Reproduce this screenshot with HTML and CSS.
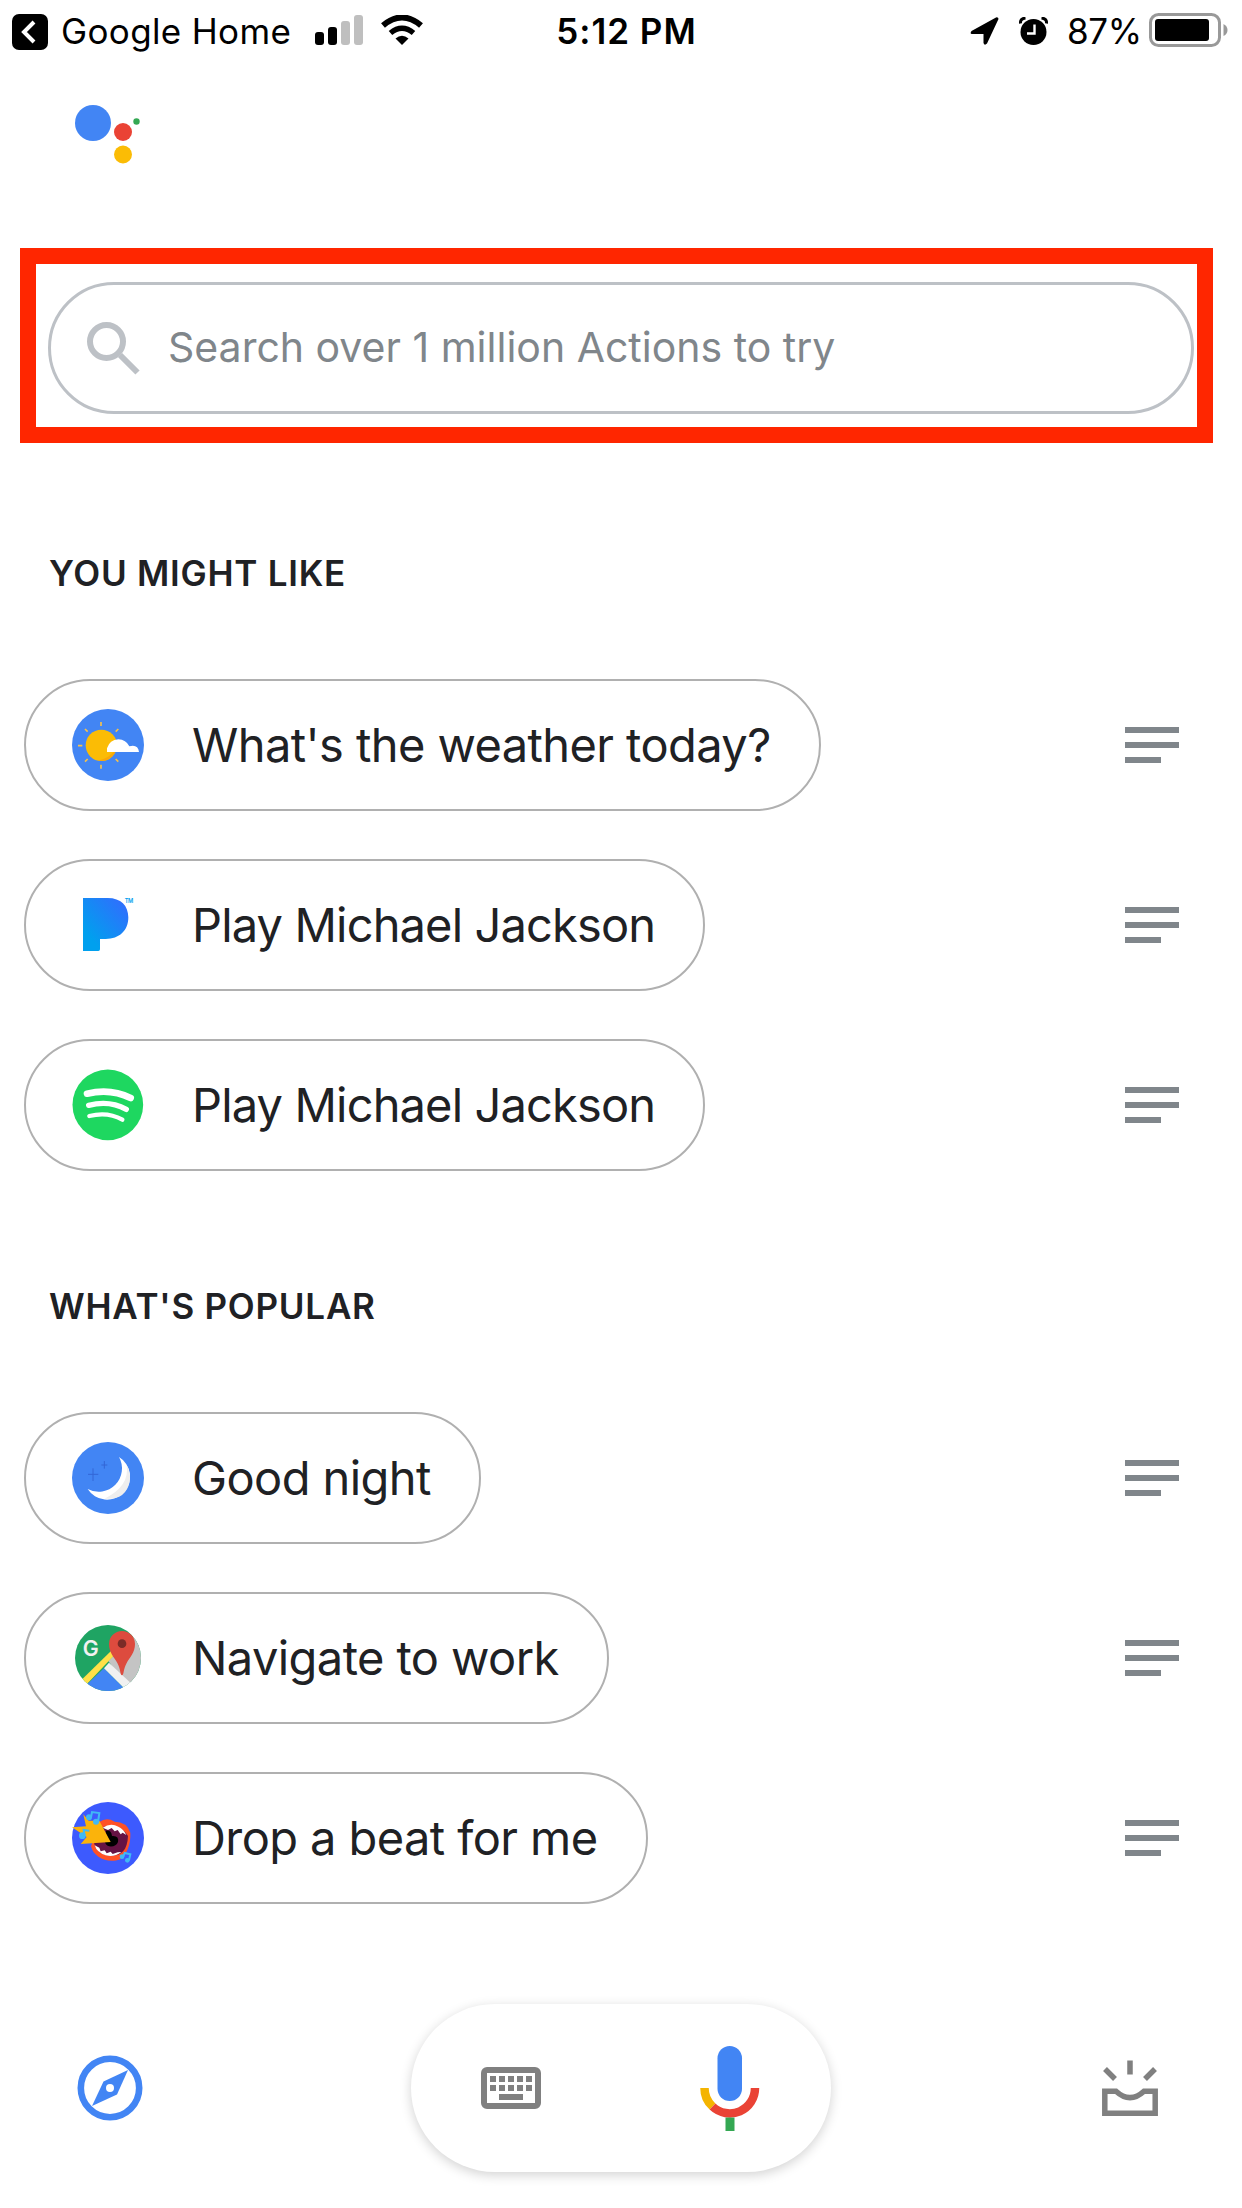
FILE: index.html
```html
<!DOCTYPE html>
<html lang="en">
<head>
    <meta charset="UTF-8">
    <meta name="viewport" content="width=device-width, initial-scale=1.0">
    <title>Google Assistant - Explore</title>
    <link rel="stylesheet" href="styles.css">
</head>
<body>
    <header class="status-bar">
        <div class="status-left">
            <svg class="back-icon" viewBox="0 0 36 36">
                <rect width="36" height="36" rx="7"/>
                <path d="M22 8 12 18 22 28" fill="none" stroke="#fff" stroke-width="4"/>
            </svg>
            <span class="back-label">Google Home</span>
            <svg class="signal-icon" viewBox="0 0 48 30">
                <rect x="0" y="17" width="9" height="13" rx="3"/>
                <rect x="13" y="12" width="9" height="18" rx="3"/>
                <rect x="26" y="6" width="9" height="24" rx="3" fill="#bfbfbf"/>
                <rect x="39" y="0" width="9" height="30" rx="3" fill="#bfbfbf"/>
            </svg>
            <svg class="wifi-icon" viewBox="0 0 42 30">
                <path d="M2 10.500Q21 -5.500 40 10.500" fill="none" stroke="#000" stroke-width="6"/>
                <path d="M9.500 18Q21 8.500 32.500 18" fill="none" stroke="#000" stroke-width="5.500"/>
                <path d="M14.500 23.500Q21 18 27.500 23.500L21 30z"/>
            </svg>
        </div>
        <span class="time">5:12 PM</span>
        <div class="status-right">
            <svg class="location-icon" viewBox="0 0 29 28">
                <path d="M26 .4 1.500 14Q-.5 17 2 17H13.500V26Q14.500 29 17 26.500L28.500 2Q28.500 0 26 .4z"/>
            </svg>
            <svg class="alarm-icon" viewBox="0 0 29 28">
                <circle cx="14.500" cy="15" r="13"/>
                <path d="M1.500 6.500Q1 1.500 6.500 1M22.500 1Q28 1.500 27.500 6.500" fill="none" stroke="#000" stroke-width="3"/>
                <path d="M15.500 7.500V16.500H8" fill="none" stroke="#fff" stroke-width="2.400"/>
            </svg>
            <span class="battery-label">87%</span>
            <svg class="battery-icon" viewBox="0 0 79 34">
                <rect x="1.500" y="1.500" width="69" height="31" rx="8" fill="none" stroke="#999" stroke-width="3"/>
                <rect x="6" y="6" width="54" height="22" rx="3"/>
                <path d="M74.500 11Q78.500 13 78.500 17T74.500 23z" fill="#999"/>
            </svg>
        </div>
    </header>

    <svg class="assistant-logo" viewBox="0 0 66 60">
        <circle cx="18" cy="18" r="18" fill="#4285f4"/>
        <circle cx="48" cy="27" r="9" fill="#ea4335"/>
        <circle cx="48" cy="49.500" r="9" fill="#fbbc05"/>
        <circle cx="61.500" cy="16.500" r="3.200" fill="#34a853"/>
    </svg>

    <div class="highlight">
        <div class="search">
            <svg class="search-icon" viewBox="0 0 54 54">
                <circle cx="20.500" cy="20.500" r="16.500"/>
                <path d="M34 34 51.500 51.500"/>
            </svg>
            <span class="search-text">Search over 1 million Actions to try</span>
        </div>
    </div>

    <main>
        <section class="group">
            <h2>YOU MIGHT LIKE</h2>
            <div class="row">
                <div class="chip">
                    <svg class="chip-icon" viewBox="0 0 216 216">
                        <circle cx="108" cy="108" r="108" fill="#4285f4"/>
                        <g stroke="#f6c14a" stroke-width="5">
                            <path d="M87 39v12M87 167v12M18 110h13M39 60l8 8M139 60l-8 8M39 158l8-8M139 158l-8-8"/>
                        </g>
                        <circle cx="88" cy="109" r="47" fill="#fbbc05"/>
                        <path d="M78 155Q112 148 133 120L130 130A47 47 0 0 1 78 155z" fill="#f9a60a"/>
                        <path d="M105 129V118Q113 92 139 91 162 92 172 112 198 105 201 129z" fill="#fff"/>
                    </svg>
                    <span class="chip-text">What's the weather today?</span>
                </div>
                <svg class="menu-icon" viewBox="0 0 24 24"><path d="M3 18h12v-2H3zM3 6v2h18V6zM3 13h18v-2H3z"/></svg>
            </div>
            <div class="row">
                <div class="chip chip-music">
                    <svg class="chip-icon" viewBox="0 0 216 216">
                        <defs>
                            <linearGradient id="pandora" x1="0" y1="1" x2="1" y2="0">
                                <stop offset=".2" stop-color="#00a0ee"/>
                                <stop offset="1" stop-color="#3668ff"/>
                            </linearGradient>
                        </defs>
                        <path d="M33 27H107C147 27 169 50 169 85 169 125 142 150 101 150H84V181Q84 186 79 186H33z" fill="url(#pandora)"/>
                        <text x="158" y="41" class="trademark">TM</text>
                    </svg>
                    <span class="chip-text">Play Michael Jackson</span>
                </div>
                <svg class="menu-icon" viewBox="0 0 24 24"><path d="M3 18h12v-2H3zM3 6v2h18V6zM3 13h18v-2H3z"/></svg>
            </div>
            <div class="row">
                <div class="chip chip-music">
                    <svg class="chip-icon" viewBox="0 0 216 216">
                        <circle cx="107.500" cy="107.500" r="106" fill="#1ed760"/>
                        <g fill="none" stroke="#fff" stroke-linecap="round">
                            <path d="M45 74Q116 57 176 87" stroke-width="20"/>
                            <path d="M50 109Q112 93 163 121" stroke-width="16"/>
                            <path d="M52 141Q107 127 151 152" stroke-width="13"/>
                        </g>
                    </svg>
                    <span class="chip-text">Play Michael Jackson</span>
                </div>
                <svg class="menu-icon" viewBox="0 0 24 24"><path d="M3 18h12v-2H3zM3 6v2h18V6zM3 13h18v-2H3z"/></svg>
            </div>
        </section>

        <section class="group">
            <h2>WHAT'S POPULAR</h2>
            <div class="row">
                <div class="chip">
                    <svg class="chip-icon" viewBox="0 0 216 216">
                        <circle cx="108" cy="108" r="108" fill="#4285f4"/>
                        <path d="M141 45A70 70 0 0 1 47 141 69 69 0 1 0 141 45z" fill="#fff"/>
                        <path d="M164 70Q174 132 98 170 160 176 173 120 177 92 164 70z" fill="#eee"/>
                        <path d="M63 79v38M48 97h31M97 57v23M88 69h18" stroke="#3367d6" stroke-width="3"/>
                    </svg>
                    <span class="chip-text">Good night</span>
                </div>
                <svg class="menu-icon" viewBox="0 0 24 24"><path d="M3 18h12v-2H3zM3 6v2h18V6zM3 13h18v-2H3z"/></svg>
            </div>
            <div class="row">
                <div class="chip">
                    <svg class="chip-icon" viewBox="0 0 216 216">
                        <defs>
                            <clipPath id="map"><circle cx="108" cy="108" r="99"/></clipPath>
                        </defs>
                        <g clip-path="url(#map)">
                            <rect width="216" height="216" fill="#1fa463"/>
                            <path d="M109 117 190 38H216V216H180z" fill="#c4c4c4"/>
                            <path d="M22 180 130 74 138 88 37 194z" fill="#ffe047"/>
                            <path d="M96 139 30 201V216H174z" fill="#4285f4"/>
                            <path d="M96 139 111 122 185 191 165 207z" fill="#f1f1f1"/>
                        </g>
                        <path d="M150 160C144 160 147 143 136 123 126 105 111 92 111 66A39 39 0 0 1 189 66C189 92 174 105 164 123 153 143 156 160 150 160z" fill="#dd4b3e"/>
                        <circle cx="150" cy="65" r="13" fill="#7b2b27"/>
                        <text x="32" y="101" class="map-letter">G</text>
                    </svg>
                    <span class="chip-text">Navigate to work</span>
                </div>
                <svg class="menu-icon" viewBox="0 0 24 24"><path d="M3 18h12v-2H3zM3 6v2h18V6zM3 13h18v-2H3z"/></svg>
            </div>
            <div class="row">
                <div class="chip">
                    <svg class="chip-icon" viewBox="0 0 216 216">
                        <circle cx="108" cy="108" r="108" fill="#3d5afe"/>
                        <!-- mouth -->
                        <path d="M82 60Q104 44 128 59 164 59 175 92C177 130 162 160 144 172 108 186 64 166 57 133z" fill="#ff5126"/>
                        <path d="M90 76Q142 62 168 102C166 145 148 160 122 161 90 162 70 144 66 122z" fill="#661344"/>
                        <path d="M92 77Q116 61 139 74 156 82 163 99L152 92 146 97 137 84 128 88 119 78 108 84z" fill="#fff"/>
                        <path d="M68 130 82 137 86 148 98 145 104 154 116 149 122 156 137 151 148 150Q128 166 101 160 74 151 68 130z" fill="#fff"/>
                        <path d="M102 86Q118 84 120 102 142 100 138 120 132 135 112 133 101 130 99 119z" fill="#000"/>
                        <path d="M0 76 42 73 34 37 50 56 82 56 116 120 26 126 44 105z" fill="#fbb30b"/>
                        <!-- notes -->
                        <g fill="#40b9f5">
                            <circle cx="51" cy="46" r="9"/>
                            <circle cx="72" cy="59" r="9"/>
                            <circle cx="31" cy="101" r="10"/>
                            <circle cx="150" cy="164" r="7"/>
                            <circle cx="166" cy="175" r="7"/>
                        </g>
                        <path d="M57 46 60 30 82 33 78 60M38 100 35 84 52 86M154 164 158 153 175 157 171 175" fill="none" stroke="#40b9f5" stroke-width="6"/>
                    </svg>
                    <span class="chip-text">Drop a beat for me</span>
                </div>
                <svg class="menu-icon" viewBox="0 0 24 24"><path d="M3 18h12v-2H3zM3 6v2h18V6zM3 13h18v-2H3z"/></svg>
            </div>
        </section>
    </main>

    <footer class="bottom-bar">
        <svg class="compass-icon" viewBox="0 0 66 66">
            <circle cx="33" cy="33" r="29.200" fill="none" stroke="#4285f4" stroke-width="6.600"/>
            <path d="M51 15 26.500 26.500 15 51 40 39.500z" fill="#4285f4"/>
            <circle cx="33" cy="33" r="4" fill="#fff"/>
        </svg>
        <div class="input-pill">
            <svg class="keyboard-icon" viewBox="0 0 60 42">
                <rect x="3" y="3" width="54" height="36" rx="3" fill="none" stroke="#808080" stroke-width="6"/>
                <path d="M9 12H51M9 21H51" stroke="#808080" stroke-width="6" stroke-dasharray="6 3"/>
                <path d="M18 30H42" stroke="#808080" stroke-width="6"/>
            </svg>
            <svg class="mic-icon" viewBox="0 0 60 85">
                <rect x="17.500" y="0" width="24.500" height="55" rx="12.250" fill="#4285f4"/>
                <path d="M4.500 42A25 25 0 0 0 12.500 60.500" fill="none" stroke="#f4b400" stroke-width="8.500"/>
                <path d="M12.500 60.500A25.200 25.200 0 0 0 55 42" fill="none" stroke="#ea4335" stroke-width="8.500"/>
                <rect x="25.500" y="71.500" width="9" height="13.500" fill="#34a853"/>
            </svg>
        </div>
        <svg class="updates-icon" viewBox="0 0 56 57">
            <path d="M28 0.500V14.500M3 9 13 19M53 9 43 19" stroke-width="5.500"/>
            <path d="M2.800 31.200H14Q28 44 42 31.200H53.200V53.200H2.800z" stroke-width="5.500"/>
        </svg>
    </footer>
</body>
</html>
```

FILE: styles.css
```css
* {
    box-sizing: border-box;
}
body {
    margin: 0;
    height: 2208px;
    display: flex;
    flex-direction: column;
    background: #fff;
    font-family: Inter, "Liberation Sans", sans-serif;
    color: #202124;
    overflow: hidden;
    white-space: nowrap;
}
svg {
    display: block;
    flex: none;
}
.status-bar {
    height: 64px;
    padding: 0 14px 0 12px;
    display: grid;
    grid-template-columns: 1fr auto 1fr;
    align-items: center;
    font-size: 35px;
    line-height: 62px;
    color: #000;
}
.status-left, .status-right {
    display: flex;
    align-items: center;
    height: 64px;
}
.status-right {
    justify-content: flex-end;
}
.back-icon {
    width: 36px;
    height: 36px;
}
.back-label {
    width: 253px;
    padding: 0 0 2px 13px;
    letter-spacing: 0.35px;
}
.signal-icon {
    width: 48px;
    height: 30px;
    margin: -4px 18px 0 14px;
}
.wifi-icon {
    width: 42px;
    height: 30px;
    margin-top: -4px;
}
.time {
    padding: 0 0 2px 13px;
    font-weight: 600;
    letter-spacing: 1px;
}
.location-icon {
    width: 29px;
    height: 28px;
    margin-top: -2px;
}
.alarm-icon {
    width: 29px;
    height: 28px;
    margin: -3px 19px 0 20px;
}
.battery-label {
    width: 82px;
    padding-bottom: 2px;
    letter-spacing: -0.4px;
}
.battery-icon {
    width: 79px;
    height: 34px;
    margin-top: -4px;
}
.assistant-logo {
    width: 66px;
    height: 60px;
    margin: 41px 0 0 75px;
}
.highlight {
    width: 1193px;
    height: 195px;
    margin: 83px 0 0 20px;
    padding: 18px 3px 0 12px;
    border: 16px solid #ff2600;
}
.search {
    height: 132px;
    display: flex;
    align-items: center;
    padding-left: 35px;
    border: 3px solid #bdc1c6;
    border-radius: 66px;
}
.search-icon {
    width: 54px;
    height: 54px;
    fill: none;
    stroke: #bdc1c6;
    stroke-width: 6;
}
.search-text {
    margin-left: 28px;
    padding-bottom: 3px;
    font-size: 41px;
    color: #80868b;
}
.group {
    padding: 0 60px 0 24px;
}
.group h2 {
    height: 44px;
    margin: 108px 0 84px 25px;
    font-size: 35px;
    line-height: 44px;
    font-weight: 600;
    letter-spacing: 0.75px;
}
.group + .group h2 {
    margin-top: 113px;
}
.row {
    display: flex;
    justify-content: space-between;
    align-items: center;
    height: 132px;
    margin-bottom: 48px;
}
.chip {
    display: flex;
    align-items: center;
    height: 132px;
    padding: 0 48px 0 46px;
    border: 2px solid #b0b0b0;
    border-radius: 66px;
    font-size: 47px;
    letter-spacing: -0.58px;
}
.chip-music {
    letter-spacing: -0.85px;
}
.chip-icon {
    width: 72px;
    height: 72px;
    margin-right: 48px;
}
.chip-text {
    padding-bottom: 2px;
}
.trademark {
    font-size: 17px;
    font-weight: 600;
    fill: #00a0ee;
}
.map-letter {
    font-size: 64px;
    font-weight: 600;
    fill: #f1f1f1;
}
.menu-icon {
    width: 72px;
    height: 72px;
    margin-right: -6px;
    fill: #80868b;
}
.bottom-bar {
    display: flex;
    justify-content: space-between;
    align-items: center;
    height: 168px;
    margin-top: 52px;
    padding: 0 84px 0 77px;
}
.compass-icon {
    width: 66px;
    height: 66px;
}
.input-pill {
    width: 420px;
    height: 168px;
    display: flex;
    justify-content: space-between;
    align-items: center;
    margin-right: 4px;
    padding: 0 71px 0 70px;
    border-radius: 84px;
    box-shadow: 0 3px 12px rgba(0, 0, 0, 0.18);
}
.keyboard-icon {
    width: 60px;
    height: 42px;
}
.mic-icon {
    width: 60px;
    height: 85px;
}
.updates-icon {
    width: 56px;
    height: 57px;
    fill: none;
    stroke: #808080;
}
```
